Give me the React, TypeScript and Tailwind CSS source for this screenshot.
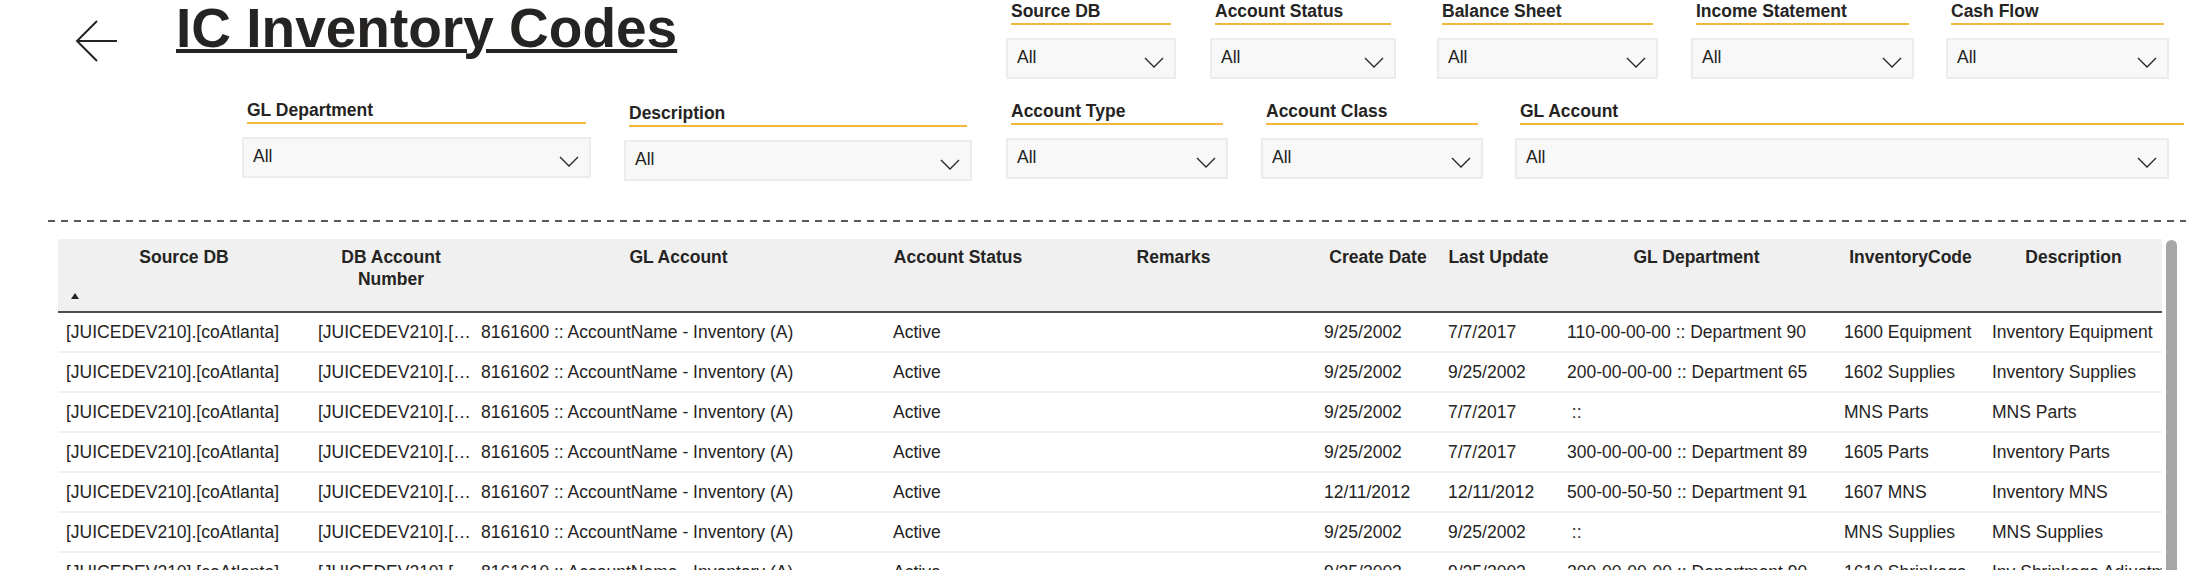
import React from 'react';

type SlicerProps = {
  label: string;
  box: string;
  line?: string;
};

const Slicer: React.FC<SlicerProps> = ({ label, box, line = 'mx-[5px]' }) => (
  <div className={`flex flex-col ${box}`}>
    <div className="px-[5px] h-[20px] leading-[20px] text-[17.5px] font-bold whitespace-nowrap">{label}</div>
    <div className={`mt-[2px] h-[2px] bg-[#f2b73b] ${line}`} />
    <div className="mt-[13px] h-[41px] border-2 border-[#ececec] bg-[#f8f8f8] flex items-start">
      <span className="mt-[7px] pl-[9px] leading-[20px] text-[17.5px]">All</span>
      <svg className="ml-auto mt-[17px] mr-[10px]" width="20" height="11" viewBox="0 0 20 11">
        <path d="M1 1L10 10L19 1" fill="none" stroke="#252423" strokeWidth="1.3" />
      </svg>
    </div>
  </div>
);

const headers: { w: string; lines: string[]; sort?: boolean }[] = [
  { w: 'w-[252px]', lines: ['Source DB'], sort: true },
  { w: 'w-[162px]', lines: ['DB Account', 'Number'] },
  { w: 'w-[413px]', lines: ['GL Account'] },
  { w: 'w-[146px]', lines: ['Account Status'] },
  { w: 'w-[285px]', lines: ['Remarks'] },
  { w: 'w-[124px]', lines: ['Create Date'] },
  { w: 'w-[117px]', lines: ['Last Update'] },
  { w: 'w-[279px]', lines: ['GL Department'] },
  { w: 'w-[149px]', lines: ['InventoryCode'] },
  { w: 'w-[177px]', lines: ['Description'] },
];

const cellClasses = [
  'w-[252px] pl-[8px]',
  'w-[162px] pl-[8px]',
  'w-[413px] pl-[9px]',
  'w-[146px] pl-[8px]',
  'w-[285px] pl-[8px]',
  'w-[124px] pl-[8px]',
  'w-[117px] pl-[8px]',
  'w-[279px] pl-[10px]',
  'w-[149px] pl-[8px]',
  'w-[177px] pl-[7px]',
];

const src = '[JUICEDEV210].[coAtlanta]';
const dbNum = '[JUICEDEV210].[…';

const rows: string[][] = [
  [src, dbNum, '8161600 :: AccountName - Inventory (A)', 'Active', '', '9/25/2002', '7/7/2017', '110-00-00-00 :: Department 90', '1600 Equipment', 'Inventory Equipment'],
  [src, dbNum, '8161602 :: AccountName - Inventory (A)', 'Active', '', '9/25/2002', '9/25/2002', '200-00-00-00 :: Department 65', '1602 Supplies', 'Inventory Supplies'],
  [src, dbNum, '8161605 :: AccountName - Inventory (A)', 'Active', '', '9/25/2002', '7/7/2017', ' ::', 'MNS Parts', 'MNS Parts'],
  [src, dbNum, '8161605 :: AccountName - Inventory (A)', 'Active', '', '9/25/2002', '7/7/2017', '300-00-00-00 :: Department 89', '1605 Parts', 'Inventory Parts'],
  [src, dbNum, '8161607 :: AccountName - Inventory (A)', 'Active', '', '12/11/2012', '12/11/2012', '500-00-50-50 :: Department 91', '1607 MNS', 'Inventory MNS'],
  [src, dbNum, '8161610 :: AccountName - Inventory (A)', 'Active', '', '9/25/2002', '9/25/2002', ' ::', 'MNS Supplies', 'MNS Supplies'],
  [src, dbNum, '8161610 :: AccountName - Inventory (A)', 'Active', '', '9/25/2002', '9/25/2002', '200-00-00-00 :: Department 90', '1610 Shrinkage', 'Inv Shrinkage Adjustment'],
];

export default function App() {
  return (
    <div className="w-[2210px] h-[570px] overflow-hidden bg-white text-[#252423] font-['Liberation_Sans',Arial,sans-serif]">
      {/* title + first slicer row */}
      <div className="flex h-[100px]">
        <div className="w-[1006px] flex items-start">
          <svg className="ml-[75px] mt-[19px]" width="44" height="44" viewBox="0 0 44 44">
            <path d="M42 22H2M22 2L2 22L22 42" fill="none" stroke="#252423" strokeWidth="2" />
          </svg>
          <h1 className="ml-[57px] text-[55px] leading-[56px] font-bold underline decoration-[4px] underline-offset-[2px] whitespace-nowrap">
            IC Inventory Codes
          </h1>
        </div>
        <div className="flex items-start pt-[1px]">
          <Slicer label="Source DB" box="w-[170px]" />
          <Slicer label="Account Status" box="w-[186px] ml-[34px]" />
          <Slicer label="Balance Sheet" box="w-[221px] ml-[41px]" />
          <Slicer label="Income Statement" box="w-[223px] ml-[33px]" />
          <Slicer label="Cash Flow" box="w-[223px] ml-[32px]" />
        </div>
      </div>

      {/* second slicer row */}
      <div className="flex items-start h-[120px] pl-[242px]">
        <Slicer label="GL Department" box="w-[349px]" />
        <Slicer label="Description" box="w-[348px] ml-[33px] mt-[3px]" />
        <Slicer label="Account Type" box="w-[222px] ml-[34px] mt-[1px]" />
        <Slicer label="Account Class" box="w-[222px] ml-[33px] mt-[1px]" />
        <Slicer label="GL Account" box="w-[654px] ml-[32px] mt-[1px]" line="ml-[5px] -mr-[15px]" />
      </div>

      <div className="ml-[48px] w-[2138px] h-[2px] bg-[repeating-linear-gradient(90deg,#5a5a5a_0_7px,transparent_7px_13px)]" />

      {/* table */}
      <div className="flex ml-[58px] mt-[17px]">
        <div className="w-[2104px]">
          <div className="flex h-[74px] bg-[#f0f0f0] border-b-2 border-[#4d4d4d]">
            {headers.map((h, i) => (
              <div key={i} className={`relative ${h.w} pt-[7px] text-center text-[17.5px] leading-[22px] font-bold`}>
                {h.lines.map((l, j) => (
                  <div key={j}>{l}</div>
                ))}
                {h.sort && (
                  <svg className="absolute left-[13px] bottom-[12px]" width="8" height="6" viewBox="0 0 8 6">
                    <path d="M4 0L8 6H0Z" fill="#252423" />
                  </svg>
                )}
              </div>
            ))}
          </div>
          {rows.map((r, i) => (
            <div key={i} className="flex items-center h-[40px] border-b-2 border-[#f0f0f0] text-[17.5px] leading-[22px]">
              {r.map((c, j) => (
                <div key={j} className={`${cellClasses[j]} overflow-hidden whitespace-pre`}>
                  {c}
                </div>
              ))}
            </div>
          ))}
        </div>
        <div className="ml-[4px] mt-[1px] w-[11px] h-[400px] rounded-t-[6px] bg-[#a6a6a6]" />
      </div>
    </div>
  );
}
